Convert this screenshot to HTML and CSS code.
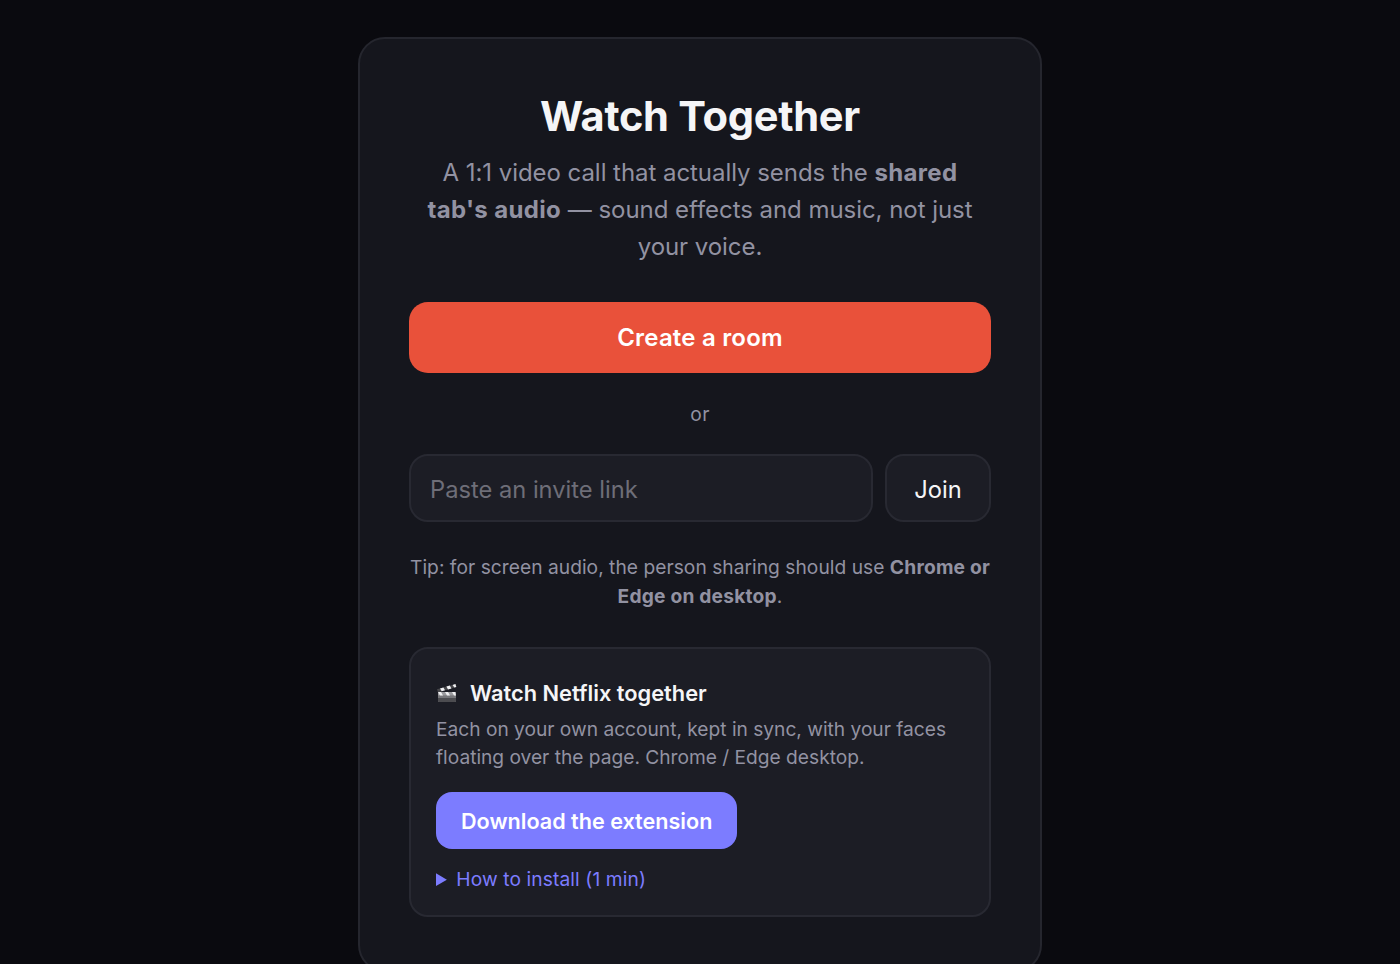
FILE: index.html
```html
<!DOCTYPE html>
<html lang="en">
<head>
  <meta charset="UTF-8">
  <meta name="viewport" content="width=device-width, initial-scale=1.0">
  <title>Watch Together</title>
  <link rel="stylesheet" href="styles.css">
</head>
<body>
  <div class="card">
    <h1>Watch Together</h1>
    <p class="lead">A 1:1 video call that actually sends the <strong>shared tab's audio</strong> — sound effects and music, not just your voice.</p>

    <button class="btn-create">Create a room</button>
    <div class="or">or</div>

    <div class="join-row">
      <input type="text" class="invite-input" placeholder="Paste an invite link">
      <button class="btn-join">Join</button>
    </div>

    <p class="tip">Tip: for screen audio, the person sharing should use <strong>Chrome or Edge on desktop</strong>.</p>

    <!-- Netflix box -->
    <div class="netflix-box">
      <div class="netflix-title">
        <svg class="clapper" viewBox="0 0 22 20" width="22" height="20" aria-hidden="true">
          <path d="M2 9h18v9a1 1 0 0 1-1 1H3a1 1 0 0 1-1-1z" fill="#77777b"/>
          <path d="M2 15h18v3a1 1 0 0 1-1 1H3a1 1 0 0 1-1-1z" fill="#4c4c50"/>
          <path d="M2 9h18v3.4H2z" fill="#9a9a9e"/>
          <path d="M1 6.2 19.6 1l.9 3L2 9.4z" fill="#47474b"/>
          <path d="M4 5.4 7.4 4.4l1.6 2.8-3.3 1zM10.4 3.6l3.4-1 1.6 2.8-3.4 1zM16.6 1.9l2.8-.8.9 2.9-2 .6z" fill="#efeff1"/>
          <path d="M2 9h3l2 3.4H4zM9 9h3l2 3.4h-3zM16 9h3l1 3.4h-2z" fill="#efeff1"/>
        </svg>
        <span>Watch Netflix together</span>
      </div>
      <p class="netflix-desc">Each on your own account, kept in sync, with your faces floating over the page. Chrome / Edge desktop.</p>
      <button class="btn-download">Download the extension</button>
      <details class="install">
        <summary>How to install (1 min)</summary>
      </details>
    </div>
  </div>
</body>
</html>
```

FILE: styles.css
```css
html, body {
  margin: 0;
  padding: 0;
  background-color: #0a0a0f;
  font-family: Inter, "Liberation Sans", sans-serif;
}

body {
  display: flex;
  justify-content: center;
  padding-top: 37px;
  overflow: hidden;
  height: 927px;
}

/* Main card */
.card {
  box-sizing: border-box;
  width: 684px;
  height: 935px;
  flex-shrink: 0;
  padding: 52px 49px 50px;
  background-color: #15161d;
  border: 2px solid #25262e;
  border-radius: 27px;
  text-align: center;
}

h1 {
  margin: 0;
  font-size: 41.6px;
  line-height: 50px;
  font-weight: 700;
  letter-spacing: -0.3px;
  color: #f5f5f7;
}

.lead {
  margin: 13px 0 0;
  padding: 0 12px;
  font-size: 24px;
  line-height: 37.2px;
  letter-spacing: -0.05px;
  color: #9292a2;
}

.lead strong, .tip strong {
  font-weight: 700;
  color: #9292a2;
}

.lead strong {
  letter-spacing: 0.35px;
}

.tip strong {
  letter-spacing: 0.2px;
}

button {
  font-family: inherit;
  cursor: pointer;
}

.btn-create {
  display: block;
  width: 100%;
  height: 71px;
  margin-top: 36px;
  padding: 1px 0 0;
  border: none;
  border-radius: 19px;
  background-color: #e9513a;
  color: #fff;
  font-size: 24px;
  font-weight: 600;
  letter-spacing: 0.2px;
}

.or {
  margin-top: 27px;
  font-size: 19.2px;
  line-height: 28px;
  letter-spacing: 0.3px;
  color: #9292a2;
}

.join-row {
  display: flex;
  gap: 12px;
  margin-top: 26px;
}

.invite-input {
  box-sizing: border-box;
  flex: 1;
  min-width: 0;
  height: 68px;
  padding: 3px 19px 0;
  background-color: #1c1d25;
  border: 2px solid #282932;
  border-radius: 19px;
  color: #f5f5f7;
  font-family: inherit;
  font-size: 23.7px;
}

.invite-input::placeholder {
  color: #6e6e78;
  opacity: 1;
}

.btn-join {
  box-sizing: border-box;
  width: 106px;
  height: 68px;
  padding: 3px 0 0;
  background-color: #1c1d25;
  border: 2px solid #282932;
  border-radius: 19px;
  color: #f5f5f7;
  font-size: 23.7px;
  font-weight: 400;
}

.tip {
  margin: 31px 0 0;
  font-size: 19.2px;
  line-height: 29px;
  letter-spacing: 0.03px;
  color: #9292a2;
}

/* Netflix box */
.netflix-box {
  box-sizing: border-box;
  height: 270px;
  margin-top: 36px;
  padding: 29px 25px 0;
  background-color: #1c1d25;
  border: 2px solid #282932;
  border-radius: 19px;
  text-align: left;
}

.netflix-title {
  display: flex;
  align-items: center;
  gap: 12px;
  font-size: 21.8px;
  line-height: 30px;
  font-weight: 600;
  color: #f5f5f7;
}

.netflix-desc {
  margin: 7px 0 0;
  font-size: 19.2px;
  line-height: 28px;
  letter-spacing: -0.02px;
  color: #9292a2;
}

.btn-download {
  display: block;
  height: 57px;
  margin-top: 21px;
  padding: 1px 25px 0;
  border: none;
  border-radius: 16px;
  background-color: #7c7cff;
  color: #fff;
  font-size: 21.6px;
  font-weight: 600;
}

.install {
  margin-top: 16px;
  font-size: 19.2px;
  line-height: 28px;
  letter-spacing: 0.1px;
  color: #7c7cff;
}

.install summary {
  cursor: pointer;
}
```
